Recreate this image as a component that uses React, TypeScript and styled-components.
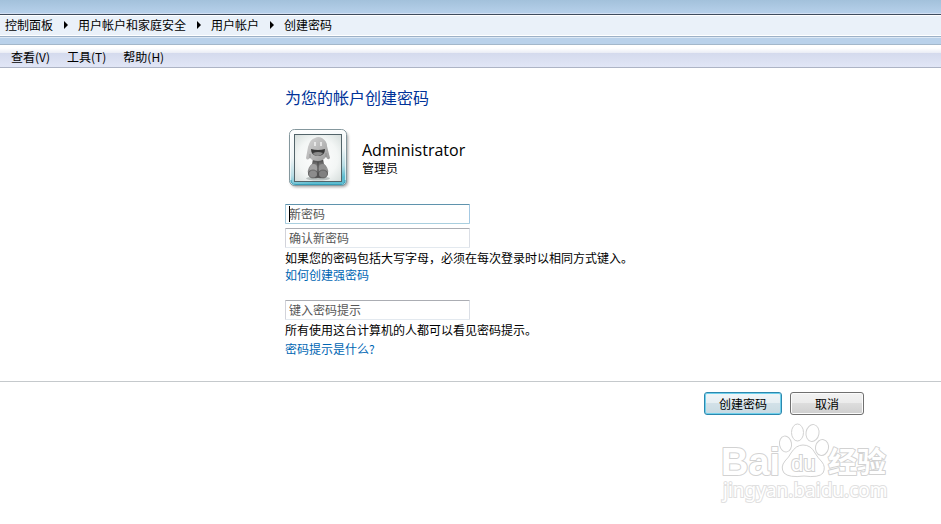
import React from 'react';
import styled, { createGlobalStyle } from 'styled-components';

const GlobalStyle = createGlobalStyle`
  *, *::before, *::after { box-sizing: border-box; }
  body {
    margin: 0;
    background: #fff;
    color: #000;
    font: 12px/16px "Noto Sans CJK SC", "Noto Sans", sans-serif;
  }
  h1, h2, p { margin: 0; font-weight: 400; }
`;

const Page = styled.div`
  display: flex;
  flex-direction: column;
  min-height: 100vh;
`;

const TitleBar = styled.div`
  height: 14px;
  background: linear-gradient(#a3c1db, #b6d0ea);
  border-bottom: 1px solid #d3e0f3;
`;

const AddressBar = styled.nav`
  height: 23px;
  border-top: 1px solid #3f4c5e;
  border-bottom: 1px solid #9db1c6;
  box-shadow: inset 0 1px #fff, inset 0 -1px #fff;
  background: #eaf1f9;
`;

const Crumbs = styled.ol`
  display: flex;
  align-items: center;
  height: 20px;
  margin: 0;
  padding: 0 5px;
  list-style: none;
`;

const Crumb = styled.li`
  display: flex;
  align-items: center;

  &:not(:last-child)::after {
    content: "";
    margin: 0 10px 0 11px;
    border-left: 4px solid #000;
    border-top: 4px solid transparent;
    border-bottom: 4px solid transparent;
  }
`;

const CrumbLink = styled.a`
  color: inherit;
  text-decoration: none;
`;

const FrameStrip = styled.div`
  height: 8px;
  background: #b9d1ea;
  border-top: 1px solid #dce8f5;
  border-bottom: 1px solid #a3b7ca;
`;

const MenuBar = styled.div`
  display: flex;
  align-items: center;
  gap: 17px;
  height: 23px;
  padding: 2px 11px 0;
  border-bottom: 1px solid #adb4c5;
  background: linear-gradient(#fff 0, #fff 3px, #e9ecf5 8px, #d4daed 8px, #e1e6f6 100%);
`;

const MenuButton = styled.button`
  padding: 0;
  border: 0;
  background: none;
  color: inherit;
  font: inherit;
`;

const Content = styled.main`
  display: flex;
  flex-direction: column;
  align-items: flex-start;
  padding: 17px 16px 24px 285px;
  border-bottom: 1px solid #c5c9cc;
`;

const Heading = styled.h1`
  color: #003399;
  font-size: 16px;
  line-height: 24px;
`;

const Account = styled.section`
  display: flex;
  align-items: center;
  gap: 9px;
  margin: 17px 0 10px;
`;

const AccountName = styled.h2`
  font-family: "Open Sans", "Noto Sans", sans-serif;
  font-size: 16px;
  line-height: 20px;
`;

const Field = styled.label<{ $caret?: boolean }>`
  position: relative;
  display: block;
  margin-top: 4px;

  &::after {
    content: "";
    display: ${({ $caret }) => ($caret ? 'block' : 'none')};
    position: absolute;
    top: 2px;
    left: 4px;
    width: 1px;
    height: 16px;
    background: #000;
  }
`;

const TextBox = styled.input<{ $active?: boolean }>`
  display: block;
  width: 185px;
  height: 20px;
  padding: 0 3px 1px;
  border: 1px solid;
  border-color: ${({ $active }) =>
    $active ? '#5f93ad #a4c9e3 #a9cfdf #a4c9db' : '#abadb3 #dbdfe6 #e3e9ef #d2d3da'};
  border-radius: 1px;
  outline: 0;
  background: #fff;
  color: #000;
  font: inherit;

  &::placeholder { color: #575757; opacity: 1; }
`;

const Note = styled.p`
  margin-top: 2px;
`;

const HelpLink = styled.a<{ $gap: number }>`
  margin-top: ${({ $gap }) => $gap}px;
  color: #0066b3;
  text-decoration: none;
`;

const HintGroup = styled.section`
  display: flex;
  flex-direction: column;
  align-items: flex-start;
  margin-top: 13px;
`;

const Actions = styled.footer`
  display: flex;
  justify-content: flex-end;
  gap: 8px;
  padding: 10px 77px 8px;
`;

const Button = styled.button<{ $primary?: boolean }>`
  min-width: 74px;
  height: 23px;
  padding: 0 14px;
  border: 1px solid ${({ $primary }) => ($primary ? '#2c88ae' : '#707070')};
  border-radius: 3px;
  box-shadow: ${({ $primary }) =>
    $primary ? 'inset 0 0 0 1px #6fd0ec' : 'inset 0 0 0 1px #fbfbfb'};
  background: ${({ $primary }) =>
    $primary
      ? 'linear-gradient(#f0f5f8 0, #e5eef2 50%, #d2e1e8 50%, #c8dae2 100%)'
      : 'linear-gradient(#f2f2f2 0, #ebebeb 50%, #dddddd 50%, #cfcfcf 100%)'};
  color: #000;
  font: inherit;
`;

const Watermark = styled.svg`
  align-self: flex-end;
  margin-right: 47px;
`;

function Avatar() {
  return (
    <svg width="68" height="64" viewBox="0 0 68 64" role="img" aria-label="Administrator">
      <defs>
        <linearGradient id="frame" x1="0" y1="0" x2="0.2" y2="1">
          <stop offset="0" stopColor="#ffffff" />
          <stop offset="0.5" stopColor="#f0f5f6" />
          <stop offset="0.8" stopColor="#b9dde5" />
          <stop offset="1" stopColor="#5dbcd0" />
        </linearGradient>
        <radialGradient id="back" cx="0.5" cy="0.5" r="0.7">
          <stop offset="0" stopColor="#ffffff" />
          <stop offset="0.6" stopColor="#f3f6f5" />
          <stop offset="1" stopColor="#d5dddb" />
        </radialGradient>
        <linearGradient id="head" x1="0" y1="0" x2="1" y2="1">
          <stop offset="0" stopColor="#d6d6d6" />
          <stop offset="1" stopColor="#9a9a9a" />
        </linearGradient>
        <linearGradient id="body" x1="0" y1="0" x2="0" y2="1">
          <stop offset="0" stopColor="#444" />
          <stop offset="0.5" stopColor="#999" />
          <stop offset="1" stopColor="#555" />
        </linearGradient>
        <filter id="shade" x="-20%" y="-20%" width="140%" height="140%">
          <feGaussianBlur stdDeviation="1.5" />
        </filter>
      </defs>
      <rect x="6" y="6" width="57" height="55" rx="5" fill="#777" opacity="0.7" filter="url(#shade)" />
      <rect x="4.5" y="3.5" width="57" height="56" rx="5" fill="url(#frame)" stroke="#84979d" />
      <rect x="5.5" y="4.5" width="55" height="54" rx="4" fill="none" stroke="#fff" opacity="0.65" />
      <path d="M6 54 Q6 58.5 11 58.5 H56 Q60 58.5 60 54" fill="none" stroke="#389fb9" />
      <rect x="9.5" y="8.5" width="47" height="47" fill="url(#back)" stroke="#53646a" />
      <ellipse cx="33" cy="52.5" rx="12" ry="2" fill="#b9c0bf" />
      <path d="M28 33 H38 L39 38 Q44 42 43 47 Q42 53 33 52 Q24 53 23 47 Q22 42 27 38 Z" fill="url(#body)" />
      <ellipse cx="28.5" cy="42" rx="3.5" ry="4" fill="#a3a3a3" />
      <ellipse cx="37.5" cy="42" rx="3.5" ry="4" fill="#929292" />
      <ellipse cx="28" cy="48" rx="4.5" ry="4" fill="#8c8c8c" stroke="#4a4a4a" strokeWidth="0.6" />
      <ellipse cx="38" cy="48" rx="4.5" ry="4" fill="#808080" stroke="#4a4a4a" strokeWidth="0.6" />
      <path d="M33 36 V51" stroke="#444" />
      <path d="M23 21 Q25 13 30 12 Q33 10 37 12 Q42 15 42 20 L45 32 Q43 35 41 31 Q38 35 33 35 Q27 35 25 32 Q22 35 21 32 Z" fill="url(#head)" />
      <path d="M30 16 V20 M36 16 V20" stroke="#f4f4f4" strokeWidth="1.5" />
      <path d="M26 23 Q33 25 40 23 Q40 30 33 30 Q26 30 26 23 Z" fill="#383838" />
      <path d="M28 27 Q33 25 38 27 Q36 30 33 30 Q29 30 28 27 Z" fill="#8b8b8b" />
      <path d="M25 28 V32 M41 27 V31" stroke="#858585" strokeWidth="0.7" />
    </svg>
  );
}

function BaiduMark() {
  return (
    <Watermark width="174" height="82" viewBox="0 0 174 82" role="img" aria-label="Baidu 经验 jingyan.baidu.com">
      <g
        fill="#fff"
        stroke="#d2d2d2"
        strokeWidth="2"
        paintOrder="stroke"
        strokeLinejoin="round"
        fontFamily="Liberation Sans, sans-serif"
        fontWeight="700"
      >
        <text x="1" y="52" fontSize="38">Bai</text>
        <text x="108" y="50" fontSize="29" fontFamily="Noto Sans CJK SC, sans-serif">经验</text>
      </g>
      <g fill="#fff" stroke="#d2d2d2">
        <ellipse cx="65.5" cy="21" rx="6" ry="8" transform="rotate(-10 65.5 21)" />
        <ellipse cx="77.5" cy="9.5" rx="6" ry="8.5" />
        <ellipse cx="92.5" cy="10" rx="6.5" ry="8.5" transform="rotate(10 92.5 10)" />
        <ellipse cx="102" cy="24.5" rx="6.5" ry="8" transform="rotate(12 102 24.5)" />
        <path d="M71 30 Q76 22 83 22 Q91 22 95 30 Q98 35 102 39 Q106 44 103 50 Q99 55 84 53 Q69 55 64 50 Q60 44 65 38 Q69 34 71 30 Z" />
      </g>
      <text
        x="71"
        y="48"
        fill="#fff"
        stroke="#d2d2d2"
        strokeWidth="2"
        paintOrder="stroke"
        fontFamily="Liberation Sans, sans-serif"
        fontSize="22"
      >
        du
      </text>
      <text
        x="3"
        y="74"
        fill="#fff"
        stroke="#e0e0e0"
        strokeWidth="2"
        paintOrder="stroke"
        fontFamily="Noto Sans, sans-serif"
        fontSize="19"
      >
        jingyan.baidu.com
      </text>
    </Watermark>
  );
}

const crumbs = ['控制面板', '用户帐户和家庭安全', '用户帐户', '创建密码'];
const menus = ['查看(V)', '工具(T)', '帮助(H)'];

export default function App() {
  return (
    <Page>
      <GlobalStyle />
      <TitleBar />
      <AddressBar>
        <Crumbs>
          {crumbs.map((name) => (
            <Crumb key={name}>
              <CrumbLink href="#">{name}</CrumbLink>
            </Crumb>
          ))}
        </Crumbs>
      </AddressBar>
      <FrameStrip />
      <MenuBar>
        {menus.map((name) => (
          <MenuButton key={name} type="button">{name}</MenuButton>
        ))}
      </MenuBar>
      <Content>
        <Heading>为您的帐户创建密码</Heading>
        <Account>
          <Avatar />
          <div>
            <AccountName>Administrator</AccountName>
            <p>管理员</p>
          </div>
        </Account>
        <Field $caret>
          <TextBox $active type="password" placeholder="新密码" aria-label="新密码" />
        </Field>
        <Field>
          <TextBox type="password" placeholder="确认新密码" aria-label="确认新密码" />
        </Field>
        <Note>如果您的密码包括大写字母，必须在每次登录时以相同方式键入。</Note>
        <HelpLink $gap={1} href="#">如何创建强密码</HelpLink>
        <HintGroup>
          <Field>
            <TextBox type="text" placeholder="键入密码提示" aria-label="键入密码提示" />
          </Field>
          <Note>所有使用这台计算机的人都可以看见密码提示。</Note>
          <HelpLink $gap={3} href="#">密码提示是什么?</HelpLink>
        </HintGroup>
      </Content>
      <Actions>
        <Button $primary type="submit">创建密码</Button>
        <Button type="button">取消</Button>
      </Actions>
      <BaiduMark />
    </Page>
  );
}
